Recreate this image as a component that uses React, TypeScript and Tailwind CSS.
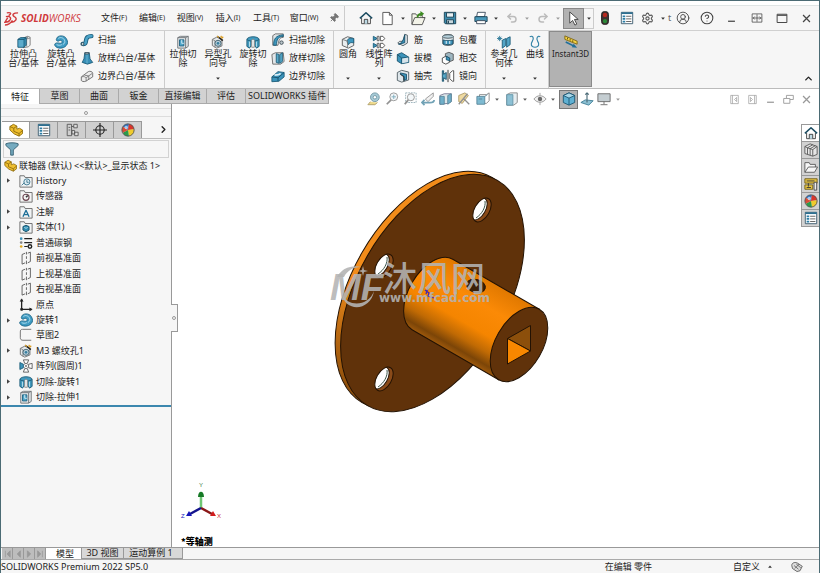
import { ReactNode } from 'react';
import clsx from 'clsx';
import { ChevronRight, ChevronUp, CircleHelp, Pin, Redo2, Settings, Undo2, CircleUserRound } from 'lucide-react';

type IconProps = { children: ReactNode; size?: string };

const Svg = ({ children, size = 'size-4' }: IconProps) => (
  <svg viewBox="0 0 16 16" className={clsx(size, 'shrink-0')} fill="none" stroke="#3c4a52" strokeWidth="1" strokeLinejoin="round" aria-hidden="true">
    {children}
  </svg>
);

const Caret = ({ faded = false }: { faded?: boolean }) => (
  <svg viewBox="0 0 5 4" className={clsx('h-[3px] w-1 shrink-0', faded ? 'fill-[#999]' : 'fill-[#333]')} aria-hidden="true">
    <path d="M0 .5h5L2.500 3.500z" />
  </svg>
);

const shapes: Record<string, ReactNode> = {
  extrude: (
    <>
      <path d="M7 3.500l5-2 3 1v9l-2 2-6 1z" fill="#eef1f2" stroke="#777" />
      <path d="M11 3v10M12 1.500v3l3-1" stroke="#888" />
      <path d="M1 5l3-2h6.500v8.500L8 14H1z" fill="#3f9ac0" stroke="#17536f" />
      <path d="M1 5h7v9M8 5l2.500-2" stroke="#17536f" />
      <path d="M1.800 5.800h5.500v7.500H1.800z" fill="#5dabcb" stroke="none" />
    </>
  ),
  revolve: (
    <>
      <path d="M3 4c1-4 9-4 11 0 2 3 2 6 0 8-3 4-11 4-13 0-1-2 1-3 3-3s3 1 5 0c1-1 0-3-2-3-1 0-1 1-2 1C3 7 2 6 3 4z" fill="#3e9bc3" stroke="#1c6586" />
      <path d="M5 4c2-2 6-1 7 2 1 2 0 4-2 5M3 11c2 1 4 1 6 0" stroke="#b9e1ef" />
    </>
  ),
  sweep: (
    <>
      <path d="M3 12.500c6 1 2-6 6-8 1-1 3-1 4-1" stroke="#1b5d7b" strokeWidth="5" strokeLinecap="round" />
      <path d="M3 12.500c6 1 2-6 6-8 1-1 3-1 4-1" stroke="#4aa3c8" strokeWidth="3" strokeLinecap="round" />
      <circle cx="3" cy="12.500" r="1.500" fill="#d5ebf3" />
    </>
  ),
  loft: (
    <>
      <path d="M5.500 2h5l1 7 3 4-6 2-6-2 2-4z" fill="#378fb7" stroke="#1b5976" />
      <path d="M5.500 2h5l-1 1.500H6z" fill="#c5e2ee" />
      <path d="M8 4v10" stroke="#73bad5" />
    </>
  ),
  boundary: (
    <>
      <path d="M1.500 9l8-6c2-1 5 0 5 2v4l-8 5c-2 1-5 0-5-1z" fill="#ececec" stroke="#666" />
      <path d="M2 9c2-1 5 0 5 2v3M7 10l7-5M5 7l5 1v4" stroke="#777" />
    </>
  ),
  cutExtrude: (
    <>
      <path d="M2 3l3-1.500h9V13l-3 2H2z" fill="#e2e6e8" stroke="#6a6f72" />
      <path d="M2 3h9v12M11 3l3-1.500" stroke="#6a6f72" />
      <path d="M4 5.500h5v7H4z" fill="#4fa5c8" stroke="#1d607f" />
      <path d="M6.500 5.500v4H9" stroke="#d9eff7" />
    </>
  ),
  wizard: (
    <>
      <path d="M1.500 5l5-2.500 6 2v8l-6 2.500-5-3z" fill="#e5e9eb" stroke="#6b6b6b" />
      <path d="M1.500 5l3 1.500v8" stroke="#888" />
      <circle cx="8" cy="9.500" r="3.500" fill="#b6cdd8" stroke="#3c5e6e" />
      <circle cx="8" cy="9.500" r="1.500" fill="#377f9f" stroke="none" />
      <path d="M8 2l5.500 4.500" stroke="#222" strokeWidth="1.800" />
      <path d="M7 1l2 2M12 1l-1 2M14 2l-2 2" stroke="#d99a1e" strokeWidth="1.300" />
    </>
  ),
  cutRevolve: (
    <>
      <path d="M1 5c1-4 13-4 14 0v8l-3 2-2-3V7H6v5l-2 3-3-2z" fill="#4299bd" stroke="#1c5b78" />
      <path d="M1 5c2 2 3 1 5 2M15 5c-2 2-3 1-5 2" stroke="#1c5b78" />
      <path d="M4 7.500v6M12 7.500v6" stroke="#bfe2ef" />
      <path d="M6.500 6L8 4.500 9.500 6v8H6.500z" fill="#f3f6f7" stroke="#888" />
    </>
  ),
  cutSweep: (
    <>
      <path d="M2 3l3-2h9v4c-5 0-5 4-6 9H2z" fill="#dfe4e6" stroke="#666" />
      <path d="M14 4C7 4 7 8 6 14H3c0-7 2-11 11-12z" fill="#3f97bd" stroke="#1c5b78" />
      <circle cx="12" cy="11" r="2" fill="#b9c4c9" />
    </>
  ),
  cutLoft: (
    <>
      <path d="M1 4l4-2h9l1 10-4 3H2z" fill="#e2e6e8" stroke="#666" />
      <path d="M6 3l3 1v10l-3-1zM10 4l3-2v10l-3 2z" fill="#58a9c9" stroke="#1c5b78" />
    </>
  ),
  cutBoundary: (
    <>
      <path d="M1 9l7-6 7 1v5l-6 5-8 .5z" fill="#3b93ba" stroke="#1c5b78" />
      <path d="M1 9l7 1 7-6M8 10v4" stroke="#154d67" />
      <path d="M4 7c3-1 4 1 7-2" stroke="#d8eef6" strokeWidth="2" />
    </>
  ),
  fillet: (
    <>
      <path d="M1.500 5l6-3 7 2v8l-6 3-7-3z" fill="#e8edef" stroke="#555" />
      <path d="M7 8c0-4 3-5 7.500-4v5c-3-1-5 0-6 2z" fill="#3d97bf" stroke="#1c5b78" />
      <path d="M1.500 5l6 2v8" stroke="#777" />
    </>
  ),
  pattern: (
    <>
      <path d="M1.500 1.500v5L6 4zM1.500 9.500v5L6 12z" fill="#3e94ba" stroke="#1c5b78" />
      <path d="M9.500 1.500h3l2 2.500-2 2.500h-3zM9.500 9.500h3l2 2.500-2 2.500h-3z" fill="#fff" stroke="#444" />
      <path d="M6 1.500h2v5H6zM6 9.500h2v5H6z" fill="#fff" stroke="#555" />
    </>
  ),
  rib: (
    <>
      <path d="M10 1.500l3 1v9l-5 3-6-3 2-2h4z" fill="#dfe6ea" stroke="#4c5960" />
      <path d="M10 2v9l-7 2c3-1 6-5 7-11z" fill="#3d94bb" stroke="#174e68" />
    </>
  ),
  draft: (
    <>
      <path d="M1.500 4l5-2 8 5v6l-8 1.500-5-3z" fill="#3b93ba" stroke="#17506a" />
      <path d="M1.500 4l5 4 8-1M6.500 8v6.500" stroke="#17506a" />
      <path d="M7 8.500l7-1v5L7 14z" fill="#d8e4ea" stroke="none" />
    </>
  ),
  shell: (
    <>
      <path d="M1.500 4l5-2.500 8 2v9l-8 2.500-5-2z" fill="#dfe7eb" stroke="#4c5960" />
      <path d="M5 4.500l7 1.500v6l-3 1V8L5 6z" fill="#3d94bb" stroke="#174e68" />
      <path d="M5 6l4 3v5" stroke="#222" />
    </>
  ),
  wrap: (
    <>
      <path d="M2 4c0-3 12-3 12 0v8c0 3-12 3-12 0z" fill="#dfe7eb" stroke="#4c5960" />
      <ellipse cx="8" cy="4" rx="6" ry="2" fill="#b4cfda" stroke="#4c5960" />
      <path d="M2.500 8c3 1 8 1 11 0v4.500c-3 1-8 1-11 0z" fill="#3d94bb" stroke="#174e68" />
      <path d="M6 9v3.500M10 9v3.500" stroke="#fff" />
    </>
  ),
  intersect: (
    <>
      <path d="M5 3l4-1.500 5 2v7l-5 2-4-2z" fill="#9fb6c0" stroke="#555" />
      <path d="M1.500 8l4-2 4 2v5l-4 2-4-2z" fill="#fff" stroke="#444" />
      <path d="M6 6l4 2v3l-4-1z" fill="#3d94bb" stroke="#174e68" />
    </>
  ),
  mirror: (
    <>
      <path d="M1.500 2v12l1.500 0v-4l3 2V4L3 6V2z" fill="#58a9c9" stroke="#174e68" />
      <path d="M8 1v14" stroke="#222" />
      <path d="M14.500 2v12H13l-3-3V5l3-3z" fill="#fff" stroke="#444" />
    </>
  ),
  refGeom: (
    <>
      <path d="M6 6l4-2v8l-4 3zM11 4l4-2v9l-4 3z" fill="#53a5c7" stroke="#1c5b78" />
      <path d="M3 1v6M0 4h6M1 2l4 4M5 2L1 6" stroke="#2b7897" />
    </>
  ),
  curve: <path d="M2 2c4-2 5 2 3 5s-2 7 3 7 5-4 3-7 0-7 3-5" stroke="#3182a5" strokeWidth="1.300" />,
  instant: (
    <>
      <path d="M1 1l14 6v3.500L1 5z" fill="#f5d344" stroke="#7d6510" />
      <path d="M4 3v2M7 4.500v2M10 6v2" stroke="#5b4a0a" />
      <path d="M2 8l10 5" stroke="#1f6f9a" strokeWidth="1.800" />
      <path d="M11 10l4 4.500-6-.5z" fill="#1f6f9a" stroke="none" />
    </>
  ),
  home: (
    <>
      <path d="M3 8v6.500h10V8" fill="#fff" stroke="#333" />
      <path d="M1 8.500L8 2l7 6.500" stroke="#1d4d62" strokeWidth="1.800" />
      <path d="M6 14.500V9.500h4v5" fill="#bcd9e4" stroke="#333" />
    </>
  ),
  file: <path d="M3 1.500h7l3 3v10H3zM10 1.500v3h3" fill="#fff" stroke="#555" />,
  open: (
    <>
      <path d="M1 3h4l1 1.500h6V7h3l-3 7.500H1z" fill="#f3f3e8" stroke="#555" />
      <path d="M1 14l3-7h11" stroke="#555" />
      <path d="M7 7c0-3 2-4 4-4" stroke="#3c8a20" strokeWidth="2" />
      <path d="M10 0l4 3-4 3z" fill="#3c8a20" stroke="none" />
    </>
  ),
  save: (
    <>
      <path d="M1.500 1.500h13v13h-12l-1-1z" fill="#3d8cae" stroke="#173e50" />
      <path d="M4 2h8v5H4z" fill="#e8f0f3" stroke="#173e50" />
      <path d="M4 10h8v4.500H4z" fill="#c8d8de" stroke="#173e50" />
      <path d="M6 11v3" stroke="#173e50" strokeWidth="1.500" />
    </>
  ),
  print: (
    <>
      <path d="M4 1.500h9l-1 5H3z" fill="#fff" stroke="#345" />
      <path d="M1 6.500h14V12H1z" fill="#4a9abb" stroke="#173e50" />
      <path d="M3 11h10v3.500H3z" fill="#fff" stroke="#345" />
    </>
  ),
  cursor: <path d="M4 1v12l3-3 2.500 5 2-1L9 9h4z" fill="#fff" stroke="#444" />,
  traffic: (
    <>
      <rect x="4" y=".5" width="8" height="15" rx="3.500" fill="#3f3030" stroke="#222" />
      <circle cx="8" cy="4.500" r="2.500" fill="#b8291f" stroke="none" />
      <circle cx="8" cy="11.500" r="2.500" fill="#2b8a38" stroke="none" />
    </>
  ),
  list: (
    <>
      <path d="M1.500 1.500h13v13h-13z" fill="#fff" stroke="#35566a" />
      <path d="M1.500 2.500h13" stroke="#2d6f90" strokeWidth="2" />
      <path d="M3 6h3M3 9h3M3 12h3" stroke="#2a7da5" strokeWidth="2" />
      <path d="M7 6h6M7 9h6M7 12h6" stroke="#555" />
    </>
  ),
  part: (
    <>
      <path d="M1 4l4-2.500 4 2v3.500l3-1 3.500 2v4l-4 3-5.500-2.500L1 8z" fill="#efbf2f" stroke="#8c6a0c" />
      <path d="M1 4l4.500 2L9 3.500M5.500 6v3.500l6 2.500 4-3.500M11.500 12v3" stroke="#8c6a0c" />
    </>
  ),
  config: (
    <>
      <path d="M2.500 1.500h5v13h-5zM7.500 4h3" stroke="#555" />
      <path d="M10 1.500h4v4h-4zM8 8.500h3v4H8zM11 10.500h4v4h-4zM4 5h2M4 8h2" fill="#ddd" stroke="#555" />
    </>
  ),
  target: (
    <>
      <circle cx="8" cy="8" r="4.800" stroke="#222" strokeWidth="1.300" />
      <path d="M8 0v16M0 8h16" stroke="#222" strokeWidth="1.300" />
    </>
  ),
  ball: (
    <>
      <path d="M8 8L2 4a7 7 0 0 1 7-3z" fill="#2f76c8" stroke="none" />
      <path d="M8 8l1-7a7 7 0 0 1 6 6z" fill="#d9352b" stroke="none" />
      <path d="M8 8l7-1a7 7 0 0 1-6 8z" fill="#efcb2d" stroke="none" />
      <path d="M8 8l1 7a7 7 0 0 1-7-4z" fill="#2c9b4a" stroke="none" />
      <path d="M8 8l-6 3a7 7 0 0 1 0-7z" fill="#d94c36" stroke="none" />
      <circle cx="8" cy="8" r="7" stroke="#555" />
      <circle cx="6" cy="5" r="2" fill="#fff" fillOpacity=".6" stroke="none" />
    </>
  ),
  funnel: <path d="M1 2c3-1.500 11-1.500 14 0v2L9.500 9v6h-3V9L1 4z" fill="#74aabf" stroke="#345e70" />,
  sensor: (
    <>
      <path d="M1 2h5l1 2h8v11H1z" fill="#f4f4f4" stroke="#666" />
      <circle cx="8" cy="9.500" r="3.500" stroke="#6e4852" strokeWidth="1.300" />
      <path d="M8 9.500l2-2" stroke="#333" strokeWidth="1.800" />
    </>
  ),
  history: (
    <>
      <path d="M1 2h5l1 2h8v11H1z" fill="#f1f4f5" stroke="#666" />
      <circle cx="9" cy="9" r="3.500" fill="#dcecf2" stroke="#36718b" />
      <path d="M9 7v2.500h2M3 13l3-3" stroke="#36718b" />
    </>
  ),
  annot: (
    <>
      <path d="M1 2h5l1 2h8v11H1z" fill="#f1f4f5" stroke="#666" />
      <path d="M4.500 13.500L8 6l3.500 7.500M6 11h4" stroke="#1e6f97" strokeWidth="1.500" />
    </>
  ),
  solid: (
    <>
      <path d="M1 2h5l1 2h8v11H1z" fill="#f1f4f5" stroke="#666" />
      <path d="M8 6l3.500 1.500v4L8 13.500l-3.500-2v-4z" fill="#2f8db3" stroke="#154f67" />
      <path d="M6 8.500l2 1 2-1" stroke="#b9e1ef" />
    </>
  ),
  material: (
    <>
      <path d="M6 3h9M6 7.500h9M6 12h4" stroke="#222" strokeWidth="1.300" />
      <circle cx="2.500" cy="3" r="1.500" fill="#3d94bb" stroke="none" />
      <circle cx="2.500" cy="7.500" r="1.500" fill="#888" stroke="none" />
      <circle cx="2.500" cy="12" r="1.500" fill="#e1a91f" stroke="none" />
      <circle cx="12.500" cy="12" r="2" stroke="#222" strokeWidth="1.600" />
    </>
  ),
  plane: <path d="M7 2.500L3.500 4v11L7 13.500M10 2.500l3-1.200v10.700l-3 1.500M8.500 1v3M8.500 6v3M8.500 11v4" stroke="#555" />,
  origin: (
    <>
      <path d="M3 2v11h11" stroke="#222" strokeWidth="1.500" />
      <path d="M1.500 4L3 1l1.500 3M12 11.500l3 1.500-3 1.500M2 12h2v2H2z" fill="#222" stroke="#222" />
    </>
  ),
  sketch: <path d="M14 1.500H4c-2 0-2.500 1-2.500 3V11c0 2 1 3 3 3H14" stroke="#666" />,
  circular: (
    <>
      <path d="M5 1h6L9.500 5h-3zM5 15h6l-1.500-4h-3zM15 5v6l-4-1V6z" fill="#fff" stroke="#555" />
      <path d="M1 4v8l4-2V6z" fill="#3e94ba" stroke="#1c5b78" />
      <path d="M6 6l4 4M10 6l-4 4" stroke="#888" />
    </>
  ),
  measure: (
    <>
      <circle cx="9" cy="6" r="5" fill="#91bdcd" stroke="#4d7b8c" />
      <circle cx="9" cy="6" r="2" fill="#fff" stroke="#4d7b8c" />
      <path d="M4 11l-3 3.500h8l3-2.500" fill="#ead171" stroke="#9a8541" />
    </>
  ),
  zoomFit: (
    <>
      <circle cx="10" cy="5.500" r="4.500" fill="#f1f6f8" stroke="#777" />
      <path d="M7 9l-5 5" stroke="#777" strokeWidth="2" />
      <path d="M10 3v5M7.500 5.500h5" stroke="#5a96ad" />
    </>
  ),
  zoomArea: (
    <>
      <path d="M3 1h12v11H3z" stroke="#7b9aa6" strokeDasharray="2 1" />
      <circle cx="9" cy="6" r="4" fill="#f1f6f8" stroke="#777" />
      <path d="M6 9l-4 5" stroke="#777" strokeWidth="2" />
    </>
  ),
  prevView: (
    <>
      <path d="M14 1L5 8l3 3 6-6z" fill="#eee" stroke="#777" />
      <path d="M4 9l-3 3 3 3M1 12h9c4 0 5-1 5-3" stroke="#4f8ca4" strokeWidth="2" />
    </>
  ),
  section: (
    <>
      <path d="M1 4l5-2h8v9l-4 2-9 1z" fill="#d7e2e6" stroke="#557" />
      <path d="M1 5h5v9H1zM10 4l4-2v9l-4 3z" fill="#4d9dbe" stroke="#2f6880" />
    </>
  ),
  pencil: (
    <>
      <path d="M2 4l7-3 4 3-7 9-4-2z" fill="#ecd28a" stroke="#9a8240" />
      <path d="M2 14L12 2M8 8l6 6" stroke="#777" strokeWidth="1.500" />
    </>
  ),
  orient: (
    <>
      <path d="M4 3h8l3-2v9l-3 3H4z" fill="#fff" stroke="#666" />
      <path d="M1 5h9v9H1z" fill="#5ea9c6" stroke="#2f6880" />
      <path d="M10 5l3-2M3 8h4" stroke="#2f6880" />
    </>
  ),
  cube: (
    <>
      <path d="M8 1l6.500 3v8L8 15l-6.500-3V4z" fill="#5fb0d2" stroke="#1c5570" />
      <path d="M1.500 4L8 7l6.500-3L8 1z" fill="#a9d7e8" stroke="#1c5570" />
      <path d="M8 7v8" stroke="#1c5570" />
    </>
  ),
  style: (
    <>
      <path d="M2 3l4-2h8v11l-4 3H2z" fill="#dfe9ed" stroke="#666" />
      <path d="M2 3h7v12H2z" fill="#70b1ca" stroke="#3e7b93" />
    </>
  ),
  eye: (
    <>
      <path d="M1 8c4-5 10-5 14 0-4 5-10 5-14 0z" fill="#eee" stroke="#777" />
      <circle cx="8" cy="8" r="2.500" fill="#444" stroke="none" />
      <path d="M8 1v3M8 12v3" stroke="#888" />
    </>
  ),
  normal: (
    <>
      <path d="M1 12l5-3 9 1-5 5z" fill="#8cc0d3" stroke="#3b7b93" />
      <path d="M8 1v11M6 3l2-2 2 2" stroke="#4b6a77" strokeWidth="1.300" />
    </>
  ),
  monitor: (
    <>
      <path d="M1 2h14v9H1z" fill="#c4cdd1" stroke="#666" />
      <path d="M8 11v3M4 14.500h8" stroke="#666" />
    </>
  ),
  min: <path d="M3 12h10" stroke="currentColor" strokeWidth="1.800" />,
  span: <path d="M1.500 2.500h13v11h-13zM8 3v10M2 8h12M5 6L3 8l2 2M11 6l2 2-2 2" stroke="currentColor" />,
  max: <path d="M1.500 3h13v11h-13zM1.500 4.500h13" stroke="currentColor" strokeWidth="1.300" />,
  close: <path d="M3 3l10 10M13 3L3 13" stroke="currentColor" strokeWidth="1.800" />,
  restore: <path d="M5 6V2h10v6h-5M1 6.500h9v7H1z" stroke="currentColor" strokeWidth="1.300" />,
  paneLeft: <path d="M2.500 2h11v12h-11zM5 2v12M11 5L8 8l3 3z" stroke="currentColor" />,
  paneRight: <path d="M2.500 2h11v12h-11zM11 2v12M5 5l3 3-3 3z" stroke="currentColor" />,
  books: (
    <>
      <path d="M1 4l6-3 8 3v9l-5 2-9-3z" fill="#e6e6e6" stroke="#555" />
      <path d="M1 4l3 1.500L10 2M4 5.500V13M4 5.500l3 1L13 3M7 6.500V14M7 6.500l3 1L15 4M10 7.500V15" stroke="#555" />
    </>
  ),
  folder: <path d="M1 14V3h5l1 2h6v3M1 14l4-6h10.500L12 14z" fill="#f6f6f6" stroke="#555" />,
  palette: (
    <>
      <path d="M1 2h14v5H1zM1 9h9v5H1z" fill="#e8c647" stroke="#6d5a14" />
      <path d="M3 4.500h9M5 7v4M3 12h5" stroke="#333" />
      <path d="M11.500 6h3v9h-3z" fill="#eee" stroke="#444" />
    </>
  ),
  tag: (
    <>
      <path d="M1 6c0-4 5-5 8-3l6 4-3 6-4 1-6-4z" fill="#ddd" stroke="#444" />
      <path d="M4 6l6 5M7 4l6 5M5 10l6-6" stroke="#555" />
    </>
  ),
};

const Icon = ({ name, size }: { name: string; size?: string }) => <Svg size={size}>{shapes[name]}</Svg>;

const menus = [
  ['文件', '(F)'],
  ['编辑', '(E)'],
  ['视图', '(V)'],
  ['插入', '(I)'],
  ['工具', '(T)'],
  ['窗口', '(W)'],
];

const SplitButton = ({ label, children, faded }: { label: string; children: ReactNode; faded?: boolean }) => (
  <button aria-label={label} className="flex w-[31px] shrink-0 items-center">
    <span className="flex w-[21px] justify-center">{children}</span>
    <span className="flex w-[10px] justify-center">
      <Caret faded={faded} />
    </span>
  </button>
);

const TitleBar = () => (
  <header className="mt-1 flex h-[25px] items-center border-t border-[#dfe4e4] bg-[#f6f6f6]">
    <div className="flex w-[94px] shrink-0 items-center gap-[2px] pl-[3px] text-[#d0393b]">
      <svg viewBox="0 0 16 16" className="size-[15px]" fill="none" stroke="currentColor" strokeWidth="1.500" aria-hidden="true">
        <path d="M3 2c5-1 5 1 2 3M2 6c5-1 6 2 4 4-1 2-3 2-5 2l3-5M15 2c-5 0-7 2-4 4 4 2 1 6-3 6M1 15c3 0 6-2 8-5" />
      </svg>
      <span className="font-['Open_Sans',sans-serif] text-[10px] leading-3 italic">
        <b>SOLID</b>WORKS
      </span>
    </div>
    <nav className="flex shrink-0">
      {menus.map(([name, key]) => (
        <button key={name} className="flex w-[38px] items-center justify-center whitespace-nowrap">
          {name}
          <span className="text-[7px]">{key}</span>
        </button>
      ))}
    </nav>
    <button aria-label="固定" className="flex w-[21px] shrink-0 justify-center text-[#777]">
      <Pin className="size-[10px] rotate-45" fill="currentColor" />
    </button>
    <div className="flex h-full shrink-0 items-center border-l border-[#ccc] pl-[10px]">
      <button aria-label="主页" className="flex w-[22px] justify-center">
        <Icon name="home" size="size-[14px]" />
      </button>
      <SplitButton label="新建"><Icon name="file" size="size-[15px]" /></SplitButton>
      <SplitButton label="打开"><Icon name="open" size="size-[15px]" /></SplitButton>
      <SplitButton label="保存"><Icon name="save" size="size-[14px]" /></SplitButton>
      <SplitButton label="打印"><Icon name="print" size="size-[14px]" /></SplitButton>
      <SplitButton label="撤消" faded><Undo2 className="size-3 text-[#bbb]" strokeWidth={3} /></SplitButton>
      <SplitButton label="重做" faded><Redo2 className="size-3 text-[#bbb]" strokeWidth={3} /></SplitButton>
    </div>
    <button aria-label="选择" className="flex h-[21px] w-[21px] shrink-0 items-center justify-center border border-[#888] bg-[#b2b2b2]">
      <Icon name="cursor" size="size-[15px]" />
    </button>
    <button aria-label="选择选项" className="flex h-[21px] w-[10px] shrink-0 items-center justify-center border border-l-0 border-[#ccc]">
      <Caret />
    </button>
    <button aria-label="重建模型" className="flex w-[22px] shrink-0 justify-center"><Icon name="traffic" size="size-[14px]" /></button>
    <button aria-label="文件属性" className="flex w-[21px] shrink-0 justify-center"><Icon name="list" size="size-[14px]" /></button>
    <SplitButton label="选项"><Settings className="size-[13px] text-[#555]" strokeWidth={2} /></SplitButton>
    <span className="w-1 shrink-0 text-[#666]">t</span>
    <div className="flex flex-1 items-center justify-between text-[#444]">
      <button aria-label="登录" className="flex w-[22px] justify-center"><CircleUserRound className="size-[14px]" strokeWidth={1.5} /></button>
      <button aria-label="帮助" className="flex w-[25px] justify-center"><CircleHelp className="size-[14px]" strokeWidth={1.8} /></button>
      <button aria-label="最小化" className="flex w-[25px] justify-center"><Icon name="min" size="size-[11px]" /></button>
      <button aria-label="跨屏" className="flex w-[25px] justify-center"><Icon name="span" size="size-3" /></button>
      <button aria-label="最大化" className="flex w-[25px] justify-center"><Icon name="max" size="size-3" /></button>
      <button aria-label="关闭" className="flex w-[25px] justify-center"><Icon name="close" size="size-[11px]" /></button>
    </div>
  </header>
);

const BigButton = ({ icon, lines, width, menu }: { icon: string; lines: string[]; width: string; menu?: boolean }) => (
  <button className={clsx('flex shrink-0 flex-col items-center pt-1 leading-[9px] whitespace-nowrap', width)}>
    <Icon name={icon} size="size-[14px]" />
    <span className="flex h-[25px] flex-col">
      {lines.map((line) => (
        <span key={line}>{line}</span>
      ))}
    </span>
    {menu && (
      <span className="flex h-2 items-center">
        <Caret />
      </span>
    )}
  </button>
);

const SmallColumn = ({ items, width }: { items: [string, string][]; width: string }) => (
  <div className={clsx('flex shrink-0 flex-col', width)}>
    {items.map(([icon, label]) => (
      <button key={label} className="flex h-[18px] items-center gap-1 whitespace-nowrap">
        <Icon name={icon} size="size-[14px]" />
        {label}
      </button>
    ))}
  </div>
);

const Ribbon = () => (
  <section className="flex h-[58px] border-t border-[#d0d0d0] bg-[#f6f6f6]">
    <div className="flex w-[164px] shrink-0 border-r border-[#ccc] pl-1">
      <BigButton icon="extrude" lines={['拉伸凸', '台/基体']} width="w-[37px]" />
      <BigButton icon="revolve" lines={['旋转凸', '台/基体']} width="w-[38px]" />
      <SmallColumn items={[['sweep', '扫描'], ['loft', '放样凸台/基体'], ['boundary', '边界凸台/基体']]} width="w-[80px]" />
    </div>
    <div className="flex w-[169px] shrink-0 border-r border-[#ccc]">
      <BigButton icon="cutExtrude" lines={['拉伸切', '除']} width="w-[36px]" />
      <BigButton icon="wizard" lines={['异型孔', '向导']} width="w-[34px]" menu />
      <BigButton icon="cutRevolve" lines={['旋转切', '除']} width="w-[36px]" />
      <SmallColumn items={[['cutSweep', '扫描切除'], ['cutLoft', '放样切除'], ['cutBoundary', '边界切除']]} width="w-[60px]" />
    </div>
    <div className="flex w-[152px] shrink-0 border-r border-[#ccc]">
      <BigButton icon="fillet" lines={['圆角']} width="w-[28px]" menu />
      <BigButton icon="pattern" lines={['线性阵', '列']} width="w-[34px]" menu />
      <SmallColumn items={[['rib', '筋'], ['draft', '拔模'], ['shell', '抽壳']]} width="w-[45px]" />
      <SmallColumn items={[['wrap', '包覆'], ['intersect', '相交'], ['mirror', '镜向']]} width="w-[43px]" />
    </div>
    <div className="flex w-[63px] shrink-0 border-r border-[#ccc]">
      <BigButton icon="refGeom" lines={['参考几', '何体']} width="w-[36px]" menu />
      <BigButton icon="curve" lines={['曲线']} width="w-[26px]" menu />
    </div>
    <button className="flex h-[56px] w-[43px] shrink-0 flex-col items-center border border-[#8a8a8a] bg-[#b2b2b2] pt-[3px] text-[8px] leading-[10px]">
      <Icon name="instant" size="size-[14px]" />
      Instant3D
    </button>
    <button aria-label="折叠" className="mt-auto mr-[5px] mb-1 ml-auto">
      <ChevronUp className="size-[11px]" strokeWidth={3} />
    </button>
  </section>
);

const tabs: [string, string][] = [
  ['特征', 'w-[39px]'],
  ['草图', 'w-[40px]'],
  ['曲面', 'w-[39px]'],
  ['钣金', 'w-[40px]'],
  ['直接编辑', 'w-[48px]'],
  ['评估', 'w-[39px]'],
  ['SOLIDWORKS 插件', 'w-[83px]'],
];

const viewTools = ['measure', 'zoomFit', 'zoomArea', 'prevView', 'section', 'pencil'];
const windowTools: [string, string][] = [
  ['paneLeft', '左窗格'],
  ['paneRight', '右窗格'],
  ['min', '最小化文档'],
  ['restore', '还原文档'],
  ['close', '关闭文档'],
];

const TabRow = () => (
  <div className="relative z-10 flex h-4 items-start border-t border-[#bbb]">
    <div role="tablist" className="flex shrink-0">
      {tabs.map(([tab, width], i) => (
        <button
          key={tab}
          role="tab"
          aria-selected={i === 0}
          className={clsx('h-[15px] shrink-0 border-r border-[#aaa] leading-[14px] whitespace-nowrap', width, i === 0 ? 'bg-white' : 'border-b bg-[#d2d2d2]')}
        >
          {tab}
        </button>
      ))}
    </div>
    <div className="flex h-5 flex-1 items-center pl-9">
      {viewTools.map((tool) => (
        <button key={tool} aria-label={tool} className="flex w-[18px] shrink-0 justify-center opacity-80">
          <Icon name={tool} size="size-[14px]" />
        </button>
      ))}
      <button aria-label="视图定向" className="flex w-[26px] shrink-0 items-center justify-between pl-[3px] opacity-80"><Icon name="orient" size="size-[14px]" /><Caret /></button>
      <button aria-label="显示样式" className="flex w-[28px] shrink-0 items-center justify-between pl-[6px] opacity-80"><Icon name="style" size="size-[14px]" /><Caret /></button>
      <button aria-label="隐藏项目" className="flex w-[28px] shrink-0 items-center justify-between pl-[6px] opacity-80"><Icon name="eye" size="size-[14px]" /><Caret /></button>
      <button aria-label="着色" className="ml-1 flex h-[19px] w-[19px] shrink-0 items-center justify-center border border-[#777] bg-[#b2b2b2]">
        <Icon name="cube" size="size-[14px]" />
      </button>
      <button aria-label="正视于" className="flex w-[18px] shrink-0 justify-center"><Icon name="normal" size="size-[14px]" /></button>
      <button aria-label="视图设置" className="flex w-[24px] shrink-0 items-center justify-between pl-px"><Icon name="monitor" size="size-[14px]" /><Caret faded /></button>
      <div className="mr-1 ml-auto flex text-[#999]">
        {windowTools.map(([icon, label]) => (
          <button key={icon} aria-label={label} className="flex w-[18px] justify-center">
            <Icon name={icon} size="size-[11px]" />
          </button>
        ))}
      </div>
    </div>
  </div>
);

type Node = { icon: string; label: string; open?: boolean };

const tree: Node[] = [
  { icon: 'history', label: 'History', open: true },
  { icon: 'sensor', label: '传感器' },
  { icon: 'annot', label: '注解', open: true },
  { icon: 'solid', label: '实体(1)', open: true },
  { icon: 'material', label: '普通碳钢' },
  { icon: 'plane', label: '前视基准面' },
  { icon: 'plane', label: '上视基准面' },
  { icon: 'plane', label: '右视基准面' },
  { icon: 'origin', label: '原点' },
  { icon: 'revolve', label: '旋转1', open: true },
  { icon: 'sketch', label: '草图2' },
  { icon: 'wizard', label: 'M3 螺纹孔1', open: true },
  { icon: 'circular', label: '阵列(圆周)1' },
  { icon: 'cutRevolve', label: '切除-旋转1', open: true },
  { icon: 'cutExtrude', label: '切除-拉伸1', open: true },
];

const FeaturePanel = () => (
  <aside className="flex w-[171px] shrink-0 flex-col border-r border-[#999] bg-[#f6f6f6]">
    <div className="mt-1 flex h-[9px] items-center justify-center border-y border-[#ddd]">
      <span className="size-1 rounded-full border border-[#999]" />
    </div>
    <div className="mt-1 flex h-[18px] items-stretch border-b border-[#bbb] pl-px">
      {['part', 'list', 'config', 'target', 'ball'].map((icon, i) => (
        <button
          key={icon}
          aria-label={icon}
          className={clsx('flex w-[28px] items-center justify-center border-t border-r border-[#999]', i === 0 ? 'bg-white' : 'bg-[#cfcfcf]')}
        >
          <Icon name={icon} size="size-[14px]" />
        </button>
      ))}
      <button aria-label="更多" className="mr-[2px] ml-auto">
        <ChevronRight className="size-[11px]" strokeWidth={3} />
      </button>
    </div>
    <label className="mx-[2px] mt-px flex h-[18px] items-center border border-[#d2d2d2] pl-px">
      <Icon name="funnel" size="size-[14px]" />
      <input aria-label="筛选" className="w-full bg-transparent outline-none" />
    </label>
    <ul className="flex h-[249px] flex-col justify-between border-b-2 border-[#3c87ae]">
      <li className="flex h-[15px] items-center gap-[2px] pl-[3px] whitespace-nowrap">
        <Icon name="part" size="size-[13px]" />
        联轴器 (默认) &lt;&lt;默认&gt;_显示状态 1&gt;
      </li>
      {tree.map((node) => (
        <li key={node.label} className="flex h-[15px] items-center whitespace-nowrap">
          <span className="flex w-[18px] shrink-0 pl-[6px]">
            {node.open && (
              <svg viewBox="0 0 4 6" className="h-[5px] w-[3px] fill-[#444]" aria-hidden="true">
                <path d="M0 0l4 3-4 3z" />
              </svg>
            )}
          </span>
          <Icon name={node.icon} size="size-[14px]" />
          <span className="ml-[3px]">{node.label}</span>
        </li>
      ))}
    </ul>
  </aside>
);

const holes = [
  [482, 210],
  [384, 266],
  [384, 379],
];

const Model = () => (
  <svg viewBox="172 104 647 443" className="h-full w-full" aria-label="联轴器">
    <defs>
      <linearGradient id="hub" x1="0" y1="-41" x2="0" y2="41" gradientUnits="userSpaceOnUse">
        <stop offset="0" stopColor="#e07800" />
        <stop offset=".3" stopColor="#fb8a06" />
        <stop offset=".6" stopColor="#f58500" />
        <stop offset=".78" stopColor="#c06a04" />
        <stop offset=".92" stopColor="#7c4507" />
        <stop offset="1" stopColor="#a05a0c" />
      </linearGradient>
      {/* runs along the long axis of the rotated rim */}
      <linearGradient id="rim" x1="1" y1="0" x2="0" y2="0">
        <stop offset="0" stopColor="#f28c1a" />
        <stop offset=".6" stopColor="#f28c1a" />
        <stop offset="1" stopColor="#8b4d0b" />
      </linearGradient>
      <clipPath id="hole">
        <ellipse rx="13" ry="7.500" transform="rotate(-60)" />
      </clipPath>
    </defs>

    {/* flange */}
    <g stroke="#231203" strokeWidth="1">
      <ellipse rx="130" ry="75" transform="translate(427 290) rotate(-60)" fill="url(#rim)" />
      <ellipse rx="130" ry="75" transform="translate(432.500 293) rotate(-60)" fill="#60320a" />
    </g>
    {holes.map(([x, y]) => (
      <g key={`${x}-${y}`} transform={`translate(${x} ${y})`}>
        <g clipPath="url(#hole)">
          <rect x="-15" y="-15" width="30" height="30" fill="#8a4b19" />
          <ellipse rx="12" ry="6.500" transform="translate(-3 -1) rotate(-60)" fill="#fff" stroke="#231203" />
          <path d="M3-9c1 6-3 13-9 17" fill="none" stroke="#3c5548" />
        </g>
        <ellipse rx="13" ry="7.500" transform="rotate(-60)" fill="none" stroke="#231203" />
      </g>
    ))}

    {/* hub */}
    <g transform="translate(519 344.500) rotate(30)" stroke="#231203">
      <path d="M0-40.700H-100A23.500 40.700 0 0 0-100 40.700H0z" fill="url(#hub)" />
      <ellipse rx="23.500" ry="40.700" fill="#60320a" />
    </g>
    <ellipse cx="476" cy="286" rx="9.500" ry="6.500" transform="rotate(15 476 286)" fill="#3a2008" stroke="#231203" />
    <path d="M507.500 338.500l23-13v25.500z" fill="#8c4f0b" stroke="#231203" />
    <path d="M507.500 338.500v25.500l23-13z" fill="#f88700" stroke="#231203" />
    <path d="M425 290l4 3-1 3 6 2M428 288l-2 6" fill="none" stroke="#4527b0" strokeWidth="1.300" />

    {/* watermark */}
    <g fill="#b4b4b4" fillOpacity=".9">
      <path d="M337 277a21 21 0 0 1 24-10c-8 0-14 4-17 10zM363 266l1 4 4 1-4 1-1 4-1-4-4-1 4-1z" />
      <path d="M342 294c6 14 27 12 32-3-3 20-29 22-32 3z" />
      <text x="330" y="300" fontSize="37" fontWeight="700" fontStyle="italic" className="font-['Liberation_Sans',sans-serif]">MF</text>
      <text x="383" y="291" fontSize="34" fontWeight="500" className="font-['Noto_Sans_CJK_SC',sans-serif]">沐风网</text>
      <text x="379" y="302" fontSize="12" fontWeight="700" className="font-['DejaVu_Sans',sans-serif]">www.mfcad.com</text>
    </g>

    {/* triad */}
    <g strokeWidth="2.500">
      <path d="M201 508v-11" stroke="#6fc774" />
      <path d="M201 508l11 6" stroke="#8b1717" />
      <path d="M201 508l-11 6" stroke="#14148c" />
      <path d="M198 497c0-7 6-7 6 0z" fill="#167a26" />
      <path d="M216 516l-3-5-3 5z" fill="#d21b1b" />
      <path d="M186 516l3-5 3 5z" fill="#1616b8" />
    </g>
    <g fontSize="6" className="font-['Liberation_Sans',sans-serif]">
      <text x="199" y="487" fill="#3c7d45">Y</text>
      <text x="217" y="518" fill="#cc2c2c">X</text>
      <text x="181" y="518" fill="#2020c0">Z</text>
    </g>
    <text x="181" y="545" fontSize="9" fontWeight="900" className="font-['Noto_Sans_CJK_SC',sans-serif]">*等轴测</text>
  </svg>
);

const Viewport = () => (
  <main className="relative flex-1 bg-white">
    <Model />
    <button aria-label="收起面板" className="absolute top-[200px] -left-px flex h-[28px] w-[7px] items-center justify-center border border-l-0 border-[#999] bg-[#f6f6f6]">
      <span className="size-1 rounded-full border border-[#999]" />
    </button>
    <div className="absolute top-5 right-0 flex flex-col border-t border-l border-[#999]">
      {['home', 'books', 'folder', 'palette', 'ball', 'list'].map((icon, i) => (
        <button key={icon} aria-label={icon} className={clsx('flex h-[17px] w-[17px] items-center justify-center border-b border-[#999]', i === 0 ? 'bg-white' : 'bg-[#d2d2d2]')}>
          <Icon name={icon} size="size-[14px]" />
        </button>
      ))}
    </div>
  </main>
);

const Footer = () => (
  <footer className="bg-[#f6f6f6]">
    <div className="flex h-3 border-t border-[#999]">
      <div className="flex pl-px">
        {['M3 1v8M9 1L5 5l4 4z', 'M8 1L4 5l4 4z', 'M3 1l4 4-4 4z', 'M2 1l4 4-4 4zM8 1v8'].map((d) => (
          <button key={d} aria-label="切换标签" className="flex w-[11px] items-center justify-center border-r border-[#999] bg-[#bdbdbd]">
            <svg viewBox="0 0 10 10" className="size-2 fill-[#999] stroke-[#999]" aria-hidden="true">
              <path d={d} />
            </svg>
          </button>
        ))}
      </div>
      <button className="w-[36px] border-r border-[#999] bg-white pl-[3px] leading-[11px]">模型</button>
      <button className="w-[42px] border-r border-b border-[#999] bg-[#d8d8d8] leading-[10px]">3D 视图</button>
      <button className="w-[59px] border-r border-b border-[#999] bg-[#d8d8d8] pr-1 leading-[10px]">运动算例 1</button>
    </div>
    <div className="flex h-[14px] items-center border-t border-[#aaa]">
      <span>SOLIDWORKS Premium 2022 SP5.0</span>
      <span className="mr-[81px] ml-auto">在编辑 零件</span>
      <button className="flex items-center gap-2">
        自定义
        <span className="rotate-180"><Caret /></span>
      </button>
      <button aria-label="标签" className="mr-4 ml-[19px]"><Icon name="tag" size="size-3" /></button>
    </div>
  </footer>
);

export default function App() {
  return (
    <div lang="zh-CN" className="flex min-h-screen flex-col border border-[#4b6b74] bg-white font-['Noto_Sans','Noto_Sans_CJK_SC',sans-serif] text-[9px] leading-3 text-[#222]">
      <TitleBar />
      <Ribbon />
      <TabRow />
      <div className="flex flex-1">
        <FeaturePanel />
        <Viewport />
      </div>
      <Footer />
    </div>
  );
}
